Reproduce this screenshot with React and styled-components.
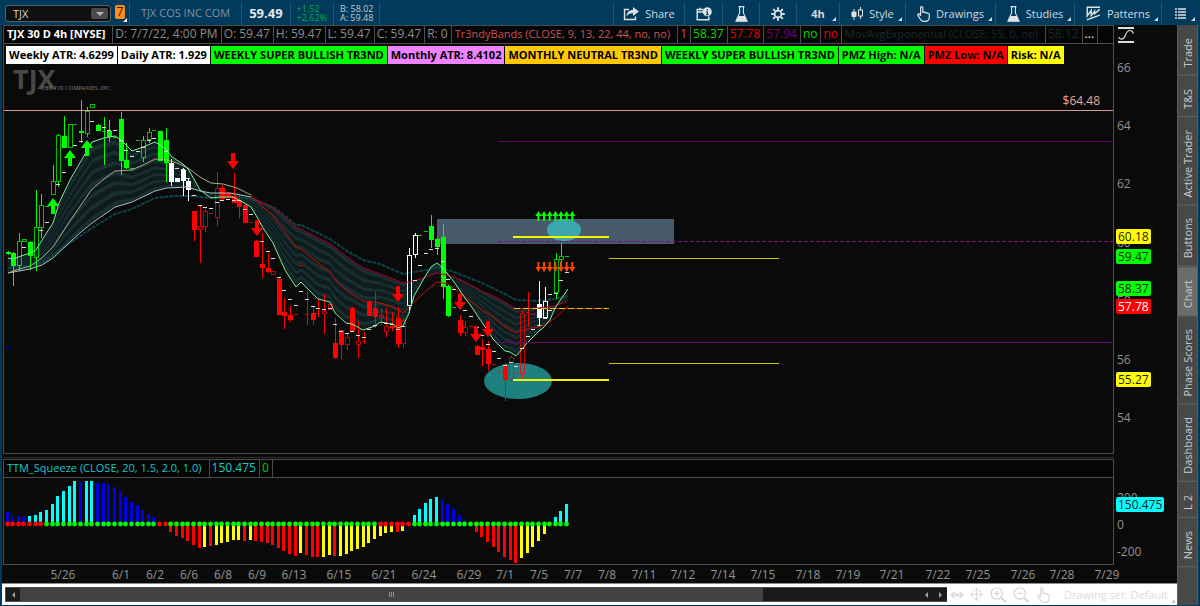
import React from "react";

// external libs
import styled, { createGlobalStyle, css } from "styled-components";

const GlobalStyle = createGlobalStyle`
  * {
    box-sizing: border-box;
  }

  body {
    margin: 0;
    background: #003a5c;
    font-family: "Open Sans", "Noto Sans", sans-serif;
    font-size: 12px;
    line-height: 16px;
    color: #929292;
  }

  button,
  input {
    font: inherit;
    color: inherit;
    margin: 0;
  }

  button {
    padding: 0;
    border: 0;
    background: none;
  }
`;

const GREEN = "#00ff00";
const RED = "#ff0000";
const WHITE = "#ffffff";
const YELLOW = "#ffff00";
const CYAN = "#00ffff";
const BLUE = "#0000e6";
const PURPLE = "#6e006e";

// first bar and distance between bars
const barX = i => 7.5 + i * 5.653;

// index, high, top of body, bottom of body, low, colour, hollow
const candles = [
  [0, 251, 252, 254, 255, GREEN],
  [1, 252, 253, 266, 286, GREEN],
  [2, 233, 241, 266, 271, GREEN, true],
  [3, 239, 239, 242, 242, GREEN, true],
  [4, 241, 242, 256, 270, GREEN],
  [5, 190, 227, 258, 271, GREEN, true],
  [6, 194, 205, 228, 238, GREEN, true],
  [7, 206, 206, 207, 207, GREEN],
  [8, 165, 181, 195, 195, GREEN, true],
  [9, 134, 135, 182, 187, GREEN, true],
  [10, 116, 136, 148, 148, GREEN],
  [11, 124, 124, 148, 148, GREEN, true],
  [12, 124, 124, 125, 125, GREEN],
  [13, 100, 131, 133, 143, GREEN],
  [14, 107, 111, 134, 137, GREEN, true],
  [15, 104, 104, 108, 108, GREEN, true],
  [16, 124, 125, 131, 131, GREEN],
  [17, 117, 131, 132, 165, GREEN],
  [18, 120, 131, 137, 142, GREEN],
  [19, 137, 137, 138, 138, GREEN],
  [20, 112, 119, 161, 175, GREEN],
  [21, 143, 160, 168, 169, GREEN],
  [22, 168, 168, 169, 169, GREEN],
  [23, 140, 140, 141, 141, GREEN],
  [24, 136, 140, 158, 162, GREEN, true],
  [25, 128, 132, 140, 143, GREEN, true],
  [26, 130, 130, 131, 131, GREEN],
  [27, 131, 131, 161, 161, GREEN],
  [28, 128, 140, 163, 182, GREEN],
  [29, 159, 163, 182, 186, WHITE],
  [30, 178, 178, 182, 182, WHITE],
  [31, 168, 170, 181, 196, WHITE],
  [32, 178, 181, 190, 201, WHITE],
  [33, 211, 211, 230, 241, RED],
  [34, 206, 226, 230, 263, RED, true],
  [35, 207, 211, 227, 232, RED, true],
  [36, 213, 213, 214, 214, RED],
  [37, 172, 188, 218, 226, RED, true],
  [38, 185, 188, 199, 201, RED],
  [39, 192, 193, 197, 198, RED],
  [40, 173, 196, 203, 203, RED],
  [41, 194, 201, 207, 218, RED],
  [42, 204, 205, 223, 223, RED],
  [43, 222, 222, 223, 223, RED],
  [44, 240, 241, 257, 257, RED],
  [45, 233, 264, 268, 278, RED],
  [46, 253, 268, 272, 273, RED],
  [47, 271, 271, 275, 275, RED, true],
  [48, 278, 279, 315, 315, RED],
  [49, 298, 312, 316, 329, RED],
  [50, 306, 315, 320, 322, RED],
  [51, 314, 314, 315, 315, RED],
  [52, 265, 265, 266, 266, RED],
  [53, 291, 314, 315, 325, RED],
  [54, 307, 313, 320, 325, RED],
  [55, 299, 313, 314, 317, RED],
  [56, 294, 311, 314, 334, RED, true],
  [57, 304, 304, 310, 310, RED, true],
  [58, 318, 343, 358, 359, RED],
  [59, 330, 330, 345, 359, RED],
  [60, 333, 337, 345, 350, RED, true],
  [61, 307, 308, 331, 331, RED],
  [62, 322, 341, 345, 358, RED, true],
  [63, 332, 341, 342, 344, RED],
  [64, 300, 301, 316, 316, RED],
  [65, 292, 308, 317, 328, RED],
  [66, 308, 315, 317, 325, RED, true],
  [67, 308, 326, 332, 337, RED, true],
  [68, 312, 326, 328, 331, RED],
  [69, 307, 318, 344, 348, RED],
  [70, 318, 320, 344, 348, RED, true],
  [71, 248, 255, 306, 313, WHITE, true],
  [72, 233, 235, 255, 258, WHITE, true],
  [73, 235, 235, 236, 236, GREEN],
  [74, 231, 231, 232, 232, GREEN],
  [75, 215, 226, 240, 248, GREEN],
  [76, 238, 239, 247, 255, GREEN],
  [77, 224, 237, 287, 299, GREEN],
  [78, 285, 286, 316, 317, GREEN],
  [79, 307, 307, 308, 308, GREEN],
  [80, 315, 320, 333, 336, RED],
  [81, 321, 327, 333, 336, RED, true],
  [82, 326, 326, 327, 327, RED],
  [83, 345, 346, 355, 355, RED],
  [84, 339, 347, 350, 366, RED],
  [85, 341, 349, 364, 371, RED],
  [86, 364, 364, 365, 365, RED],
  [87, 371, 371, 372, 372, RED],
  [88, 363, 365, 380, 401, RED],
  [89, 356, 357, 380, 382, RED, true],
  [90, 373, 373, 374, 374, RED],
  [91, 311, 313, 374, 378, RED, true],
  [92, 292, 312, 313, 327, RED],
  [93, 314, 314, 315, 315, RED],
  [94, 281, 304, 318, 327, WHITE],
  [95, 287, 301, 318, 318, WHITE, true],
  [97, 253, 259, 293, 299, GREEN, true],
  [98, 243, 256, 260, 264, GREEN, true],
  [99, 256, 256, 257, 257, GREEN]
];

// small white marks, index and y
const marks = [
  [3, 247], [6, 230], [7, 222], [8, 208], [9, 184], [10, 172], [11, 157],
  [12, 145], [13, 141], [14, 147], [15, 121], [17, 127], [18, 130], [19, 130],
  [20, 140], [21, 150], [22, 156], [23, 151], [24, 147], [25, 140], [26, 138],
  [28, 151], [30, 168], [31, 169], [32, 178], [33, 195], [34, 205], [35, 207],
  [36, 208], [37, 202], [38, 200], [39, 199], [40, 200], [41, 200], [42, 209],
  [43, 214], [44, 229], [45, 241], [46, 251], [47, 258], [48, 277], [49, 290],
  [50, 299], [51, 305], [52, 291], [53, 299], [54, 306], [55, 308], [56, 309],
  [57, 308], [58, 324], [59, 331], [60, 333], [61, 331], [62, 335], [63, 337],
  [64, 329], [65, 325], [67, 323], [68, 324], [69, 329], [70, 326], [71, 305],
  [72, 280], [73, 265], [74, 253], [75, 249], [76, 248], [77, 261], [78, 279],
  [79, 289], [80, 303], [81, 310], [82, 316], [83, 327], [84, 335], [85, 344],
  [86, 351], [87, 358], [88, 365], [89, 362], [90, 366], [91, 348], [92, 336],
  [93, 329], [94, 325], [95, 318], [96, 310], [96, 294], [97, 293], [98, 280],
  [99, 272]
];

const fastLine = [
  [8, 258], [13, 259], [24, 255], [30, 253], [36, 250], [42, 240], [53, 223],
  [59, 203], [70, 180], [81, 161], [92, 142], [104, 138], [115, 136],
  [121, 140], [132, 151], [143, 147], [155, 142], [160, 145], [166, 149],
  [172, 157], [183, 164], [188, 169], [194, 179], [200, 190], [211, 198],
  [220, 197], [233, 197], [239, 200], [251, 207], [257, 217], [263, 228],
  [273, 243], [285, 270], [296, 287], [301, 282], [307, 288], [318, 299],
  [330, 302], [335, 313], [346, 323], [352, 324], [363, 330], [375, 326],
  [380, 322], [393, 324], [398, 328], [403, 326], [409, 313], [414, 296],
  [426, 275], [431, 267], [437, 263], [443, 268], [454, 282], [465, 298],
  [471, 306], [477, 315], [488, 331], [493, 339], [499, 345], [505, 351],
  [510, 352], [516, 356], [522, 349], [527, 343], [538, 332], [544, 327],
  [550, 320], [555, 308], [561, 299], [568, 289]
];

const midLine = [
  [8, 273], [16, 270], [30, 266], [42, 258], [53, 247], [59, 238], [70, 221],
  [81, 205], [92, 189], [104, 179], [115, 171], [132, 170], [143, 165],
  [155, 159], [167, 160], [177, 163], [188, 168], [200, 177], [211, 183],
  [223, 184], [237, 188], [251, 195], [263, 207], [273, 216], [285, 232],
  [296, 247], [301, 249], [318, 263], [330, 272], [335, 280], [347, 291],
  [363, 301], [380, 303], [393, 307], [403, 313], [410, 306], [426, 291],
  [437, 282], [448, 284], [465, 297], [482, 310], [493, 317], [505, 327],
  [516, 333], [527, 329], [538, 327], [550, 322], [555, 318], [568, 306]
];

const slowLine = [
  [8, 273], [30, 269], [42, 265], [53, 258], [70, 242], [81, 232], [92, 223],
  [115, 207], [132, 202], [155, 191], [167, 188], [187, 187], [200, 191],
  [211, 193], [230, 193], [251, 197], [267, 205], [273, 208], [285, 218],
  [296, 227], [301, 229], [318, 238], [330, 244], [347, 257], [363, 268],
  [380, 274], [393, 279], [403, 283], [413, 281], [426, 277], [437, 273],
  [454, 277], [465, 282], [482, 291], [493, 296], [505, 302], [516, 309],
  [538, 308], [555, 306], [568, 301]
];

const outerLine = [
  [8, 268], [30, 266], [42, 262], [53, 255], [70, 243], [92, 228], [115, 214],
  [132, 209], [155, 198], [173, 196], [193, 196], [211, 198], [233, 197],
  [251, 199], [273, 207], [285, 216], [296, 225], [301, 225], [318, 233],
  [330, 239], [347, 251], [363, 260], [380, 264], [403, 274], [426, 270],
  [437, 267], [454, 272], [482, 283], [505, 294], [516, 300], [537, 301],
  [555, 299], [568, 296]
];

// heights above (+) or below (-) the zero line
const squeeze = [
  12, 8, 8, 7, 8, 9, 12, 14, 20, 28, 33, 38, 43, 42, 43, 43, 41, 41, 40, 37,
  33, 27, 22, 19, 14, 10, 7, 0, 0, -8, -12, -14, -17, -21, -24, -23, -22, -21,
  -19, -18, -16, -16, -17, -16, -17, -18, -19, -21, -24, -27, -30, -32, -29,
  -31, -33, -33, -33, -31, -32, -32, -30, -27, -25, -23, -19, -15, -12, -9,
  -8, -8, -7, 0, 9, 15, 21, 25, 27, 25, 20, 15, 9, 4, 0, -8, -13, -18, -23,
  -28, -33, -36, -39, -34, -29, -23, -17, -10, -2, 7, 13, 20
];

const fallingBars = [36, 42, 53, 54, 55, 58, 69];
const darkBars = [0, 1, 2, 3, 13];

const squeezeColor = (value, i) => {
  if (value > 0) {
    if (darkBars.includes(i)) return BLUE;
    return (i >= 16 && i <= 26) || (i >= 77 && i <= 82) ? BLUE : CYAN;
  }
  if (fallingBars.includes(i)) return RED;
  if (i <= 34 || (i >= 44 && i <= 51) || (i >= 83 && i <= 90)) return RED;
  return YELLOW;
};

const isSqueezed = i =>
  i <= 6 || i === 27 || i === 28 || (i >= 66 && i <= 71);

const dates = [
  [63, "5/26"], [121, "6/1"], [155, "6/2"], [189, "6/6"], [223, "6/8"],
  [257, "6/9"], [294, "6/13"], [339, "6/15"], [384, "6/21"], [424, "6/24"],
  [469, "6/29"], [505, "7/1"], [539, "7/5"], [573, "7/7"], [607, "7/8"],
  [644, "7/11"], [683, "7/12"], [723, "7/14"], [763, "7/15"], [808, "7/18"],
  [848, "7/19"], [892, "7/21"], [938, "7/22"], [978, "7/25"], [1023, "7/26"],
  [1062, "7/28"], [1107, "7/29"]
];

const studyCells = [
  { text: "TJX 30 D 4h [NYSE]", color: "#ffffff", bold: true, wordy: true },
  { text: "D: 7/7/22, 4:00 PM" },
  { text: "O: 59.47" },
  { text: "H: 59.47" },
  { text: "L: 59.47" },
  { text: "C: 59.47" },
  { text: "R: 0" },
  {
    text: "Tr3ndyBands (CLOSE, 9, 13, 22, 44, no, no)",
    color: "#d05050",
    wordy: true
  },
  { text: "1", color: "#d05050" },
  { text: "58.37", color: "#00dc00" },
  { text: "57.78", color: "#e60000" },
  { text: "57.94", color: "#780078" },
  { text: "no", color: "#00dc00" },
  { text: "no", color: "#e60000" },
  {
    text: "MovAvgExponential (CLOSE, 55, 0, no)",
    color: "#142c2c",
    wordy: true
  },
  { text: "58.12", color: "#142c2c" },
  { text: "...", color: "#ffffff" }
];

const labels = [
  { text: "Weekly ATR: 4.6299", color: WHITE },
  { text: "Daily ATR: 1.929", color: WHITE },
  { text: "WEEKLY SUPER BULLISH TR3ND", color: GREEN },
  { text: "Monthly ATR: 8.4102", color: "#ee82ff" },
  { text: "MONTHLY NEUTRAL TR3ND", color: "#ffc800" },
  { text: "WEEKLY SUPER BULLISH TR3ND", color: GREEN },
  { text: "PMZ High: N/A", color: GREEN },
  { text: "PMZ Low: N/A", color: RED },
  { text: "Risk: N/A", color: YELLOW }
];

const tabs = [
  "Trade",
  "T&S",
  "Active Trader",
  "Buttons",
  "Chart",
  "Phase Scores",
  "Dashboard",
  "L 2",
  "News"
];

const toPoints = line => line.map(p => p.join(",")).join(" ");

const valueAt = (line, x) => {
  const next = line.findIndex(p => p[0] >= x);
  if (next <= 0) return line[next === 0 ? 0 : line.length - 1][1];
  const [x0, y0] = line[next - 1];
  const [x1, y1] = line[next];
  return y0 + ((y1 - y0) * (x - x0)) / (x1 - x0);
};

// strip of the cloud between two fractions of the way from fast to slow
const ribbon = (from, to) => {
  const xs = Array.from({ length: 100 }, (_, i) => barX(i));
  const edge = f =>
    xs.map(x => {
      const a = valueAt(fastLine, x);
      const b = valueAt(slowLine, x);
      return [x, a + (b - a) * f];
    });
  return toPoints([...edge(from), ...edge(to).reverse()]);
};

const Candle = ({ data }) => {
  const [i, high, top, bottom, low, color, hollow] = data;
  const x = Math.round(barX(i));
  const flat = bottom - top === 1;
  return (
    <g fill={color} stroke="none">
      {high < top && <rect x={x} y={high} width="1" height={top - high} />}
      {low > bottom && <rect x={x} y={bottom} width="1" height={low - bottom} />}
      {hollow ? (
        <rect
          x={x - 1.5}
          y={top + 0.5}
          width="4"
          height={Math.max(bottom - top - 1, 2)}
          fill="none"
          stroke={color}
          opacity={color === WHITE ? 1 : 0.75}
        />
      ) : (
        <rect
          x={x - 2}
          y={top}
          width={flat ? 4 : 5}
          height={bottom - top}
          opacity={flat ? 0.8 : 1}
        />
      )}
    </g>
  );
};

const BigArrow = ({ x, y, up }) => (
  <path
    transform={`translate(${x} ${y})${up ? "" : " scale(1 -1)"}`}
    d="M0 -8 L6 0 H2 V8 H-2 V0 H-6 Z"
    fill={up ? GREEN : RED}
  />
);

const SmallArrow = ({ x, y, up }) => (
  <path
    transform={`translate(${x} ${y})${up ? "" : " scale(1 -1)"}`}
    d="M0 -5 L3 0 H1 V5 H-1 V0 H-3 Z"
    fill={up ? GREEN : "#ff4600"}
  />
);

const PriceChart = () => (
  <PlotSvg role="img" aria-label="TJX price chart">
    {/* plot values are kept in window space, the svg starts at 4, 44 */}
    <g transform="translate(-4 -44)">
      <g fill="#484848">
        <text x="13" y="89" fontSize="27" fontWeight="bold" fontFamily="Open Sans, sans-serif">
          TJX
        </text>
        <text
          x="41"
          y="90"
          fontSize="6"
          fontStyle="italic"
          fontFamily="Liberation Serif, serif"
          fill="#7c7c7c"
        >
          THE TJX COMPANIES, INC.
        </text>
      </g>

      <rect x="437" y="219" width="237" height="25" fill="#475a69" />
      <ellipse cx="518" cy="381" rx="34" ry="18" fill="#1e8080" />
      <ellipse cx="564" cy="230" rx="17" ry="11" fill="#3ba8b0" />

      <polygon points={ribbon(0, 1)} fill="#0f1c1d" />
      {[0, 1, 2, 3, 4, 5, 6].map(k => (
        <polygon
          key={k}
          points={ribbon((k + 0.45) / 7, (k + 0.85) / 7)}
          fill="#193032"
        />
      ))}

      <polyline
        points={toPoints(outerLine)}
        fill="none"
        stroke="#0d4448"
        strokeWidth="2"
        strokeDasharray="4 1"
      />

      <g shapeRendering="crispEdges">
        {candles.map(c => (
          <Candle key={c[0]} data={c} />
        ))}
      </g>

      <g fill="none">
        <polyline points={toPoints(slowLine.slice(0, 16))} stroke="#a8c4c4" />
        <polyline points={toPoints(slowLine.slice(15))} stroke="#b4002e" />
        <polyline points={toPoints(midLine.slice(0, 22))} stroke="#b0a98c" />
        <polyline points={toPoints(midLine.slice(21))} stroke="#c80a0a" />
        <polyline points={toPoints(fastLine)} stroke="#7ef29c" />
      </g>

      <g shapeRendering="crispEdges">
        {marks.map(([i, y]) => (
          <rect
            key={`${i}-${y}`}
            x={Math.round(barX(i)) - 2}
            y={y}
            width="4"
            height="1"
            fill="#e0e0e0"
          />
        ))}

        <rect x="4" y="110" width="100%" height="1" fill="#d89a90" />
        <rect x="498" y="141" width="100%" height="1" fill="#5c085c" />
        <line
          x1="498"
          x2="200%"
          y1="241.5"
          y2="241.5"
          stroke="#7c107c"
          strokeDasharray="4 2"
        />
        <rect x="498" y="342" width="100%" height="1" fill={PURPLE} />
        <rect x="5" y="348" width="6" height="1" fill="#0000c8" />
        <rect x="513" y="236" width="96" height="2" fill="#f5f500" />
        <rect x="513" y="379" width="96" height="2" fill="#f5f500" />
        <rect x="609" y="258" width="170" height="1" fill="#c8c800" />
        <rect x="609" y="363" width="170" height="1" fill="#c8c800" />
        <rect x="514" y="308" width="95" height="1" fill="#c81400" />
        <line
          x1="514"
          x2="609"
          y1="308.5"
          y2="308.5"
          stroke="#e6c800"
          strokeDasharray="6 3"
        />
      </g>

      <BigArrow up x={53} y={206} />
      <BigArrow up x={70} y={158} />
      <BigArrow up x={87} y={148} />
      <BigArrow x={233} y={161} />
      <BigArrow x={257} y={228} />
      <BigArrow x={398} y={294} />
      <BigArrow x={460} y={302} />
      <BigArrow x={476} y={334} />
      <BigArrow x={488} y={329} />
      {[94, 95, 96, 97, 98, 99, 100].map(i => (
        <g key={i}>
          <SmallArrow up x={barX(i) - 0.5} y={216} />
          <SmallArrow x={barX(i) - 0.5} y={267} />
        </g>
      ))}
    </g>
  </PlotSvg>
);

const SqueezeChart = () => (
  <PlotSvg role="img" aria-label="TTM Squeeze histogram">
    {/* zero line sits 46px below the panel header */}
    <g transform="translate(-4 46)">
      {squeeze.map((value, i) => (
        <g key={i}>
          <rect
            x={Math.round(barX(i)) - 2}
            y={value > 0 ? -value : 0}
            width="3"
            height={Math.abs(value)}
            fill={squeezeColor(value, i)}
          />
          <circle
            cx={Math.round(barX(i)) - 0.5}
            cy="0"
            r="2.4"
            fill={isSqueezed(i) ? RED : GREEN}
          />
        </g>
      ))}
    </g>
  </PlotSvg>
);

const ShareIcon = () => (
  <svg width="16" height="14" viewBox="0 0 16 14" aria-hidden="true">
    <path
      d="M6 2.5H1.5V12.5H12.5V9.5"
      fill="none"
      stroke="#dfe3e6"
      strokeWidth="1.4"
    />
    <path d="M10 0L16 4.5L10 9V6.3C7 6.2 5 7 3.4 9.6C3.6 5.6 6 3 10 2.7Z" fill="#dfe3e6" />
  </svg>
);

const NoteIcon = () => (
  <svg width="16" height="14" viewBox="0 0 16 14" aria-hidden="true">
    <path
      d="M7.5 2.5H1.2V12.8H12.8V9.5M1.2 5H7.5M4 0.8V3.5"
      fill="none"
      stroke="#dfe3e6"
      strokeWidth="1.4"
    />
    <circle cx="11.3" cy="4.8" r="4.5" fill="#dfe3e6" />
    <path d="M11.3 2V3.3M11.3 4.4V7.8M10.3 4.5H11.3M10 7.6H12.6" stroke="#003a5c" strokeWidth="1.2" />
  </svg>
);

const FlaskIcon = () => (
  <svg width="13" height="16" viewBox="0 0 13 16" aria-hidden="true">
    <path
      d="M3.5 0.6H9.5M4.6 1V7L0.9 15.2H12.1L8.4 7V1"
      fill="none"
      stroke="#dfe3e6"
      strokeWidth="1.1"
    />
    <path d="M3.4 10H9.6L12 15.2H1Z" fill="#dfe3e6" />
  </svg>
);

const GearIcon = () => (
  <svg width="14" height="14" viewBox="-7 -7 14 14" aria-hidden="true">
    <circle r="3.4" fill="none" stroke="#dfe3e6" strokeWidth="1.8" />
    {[0, 45, 90, 135, 180, 225, 270, 315].map(a => (
      <path
        key={a}
        transform={`rotate(${a})`}
        d="M0 -4V-6.8"
        stroke="#dfe3e6"
        strokeWidth="1.9"
      />
    ))}
  </svg>
);

const CandlesIcon = () => (
  <svg width="12" height="14" viewBox="0 0 12 14" aria-hidden="true">
    <path d="M3 2V13" stroke="#dfe3e6" />
    <rect x="0.5" y="4.5" width="5" height="5.5" rx="1" fill="#dfe3e6" />
    <path d="M9.5 0V3M9.5 9V12" stroke="#dfe3e6" />
    <rect x="7.5" y="3" width="4" height="6" fill="none" stroke="#dfe3e6" />
  </svg>
);

const HandIcon = ({ color = "#dfe3e6" }) => (
  <svg width="13" height="16" viewBox="0 0 13 16" aria-hidden="true">
    <path
      d="M3.6 9.8V1.8Q3.6 0.7 4.7 0.7Q5.8 0.7 5.8 1.8V6.2Q7.6 5.2 8 6.7Q9.8 5.9 10.2 7.4Q12.3 7 12.3 8.8V11Q12.3 15.3 8 15.3H6.8Q4.4 15.3 3.2 13L0.9 9.4Q0.5 8.2 1.6 7.9Q2.6 7.8 3.6 9.8Z"
      fill="none"
      stroke={color}
      strokeWidth="1.2"
    />
  </svg>
);

const PatternsIcon = () => (
  <svg width="15" height="15" viewBox="0 0 15 15" aria-hidden="true">
    <path
      d="M0.5 1.2H14M0.8 13.8L13.8 9.2M1.2 2V10L5.2 4.4V9.6L8.6 5V7.8L13.6 3.4"
      fill="none"
      stroke="#dfe3e6"
      strokeWidth="1.4"
    />
  </svg>
);

const ListIcon = () => (
  <svg width="11" height="11" viewBox="0 0 11 11" aria-hidden="true">
    <path
      d="M0 1H2M0 4H2M0 7H2M0 10H2M3 1H11M3 4H11M3 7H11M3 10H11"
      stroke="#dfe3e6"
      strokeWidth="1.3"
    />
  </svg>
);

const ScaleIcon = () => (
  <svg width="17" height="16" viewBox="0 0 17 16" aria-hidden="true">
    <path d="M0 1H16M0 15H16" stroke="#dcdcdc" strokeWidth="2" />
    <path
      d="M0.5 10C2 13 5.5 13 7 9C8.5 5 10 3.5 12 3.5C13.8 3.5 15 5 15.5 6.5"
      fill="none"
      stroke="#dcdcdc"
      strokeWidth="1.2"
    />
  </svg>
);

const PanIcon = () => (
  <svg width="14" height="10" viewBox="0 0 14 10" aria-hidden="true">
    <path d="M0 5L4.5 0.8V9.2ZM14 5L9.5 0.8V9.2ZM5 3.4H9V6.6H5Z" fill="#dcdcdc" />
  </svg>
);

const CrosshairIcon = () => (
  <svg width="13" height="13" viewBox="0 0 13 13" aria-hidden="true">
    <path d="M6.5 0V13M0 6.5H13" stroke="#d8d8d8" />
    <circle cx="6.5" cy="6.5" r="4.8" fill="none" stroke="#d8d8d8" />
  </svg>
);

const LensIcon = ({ plus }) => (
  <svg width="17" height="16" viewBox="0 0 17 16" aria-hidden="true">
    <circle cx="6.8" cy="6.5" r="5.7" fill="none" stroke="#d8d8d8" strokeWidth="1.3" />
    <path
      d={plus ? "M4 6.5H9.6M6.8 3.7V9.3" : "M4 6.5H9.6"}
      stroke="#d8d8d8"
      strokeWidth="1.3"
    />
    <path d="M11 10.7L16 15.5" stroke="#d8d8d8" strokeWidth="2" />
  </svg>
);

const App = () => (
  <>
    <GlobalStyle />
    <Wrapper>
      <TopBar>
        <SymbolBox>
          <SymbolInput aria-label="Symbol" defaultValue="TJX" />
          <DropButton aria-label="Symbol list" />
        </SymbolBox>
        <LinkBadge aria-label="Link 7">7</LinkBadge>
        <CompanyName>TJX COS INC COM</CompanyName>
        <LastPrice>59.49</LastPrice>
        <QuotePair $color="#00b43c">
          <span>+1.52</span>
          <span>+2.62%</span>
        </QuotePair>
        <QuotePair $color="#c3ccd2">
          <span>B: 58.02</span>
          <span>A: 59.48</span>
        </QuotePair>
        <Spacer />
        <ToolButton $width={71}>
          <ShareIcon />
          Share
        </ToolButton>
        <ToolButton $width={38} aria-label="Notes">
          <NoteIcon />
        </ToolButton>
        <ToolButton $width={37} aria-label="Edit studies">
          <FlaskIcon />
        </ToolButton>
        <ToolButton $width={37} aria-label="Settings">
          <GearIcon />
        </ToolButton>
        <ToolButton $width={43} $bold $menu>
          4h
        </ToolButton>
        <ToolButton $width={66} $menu>
          <CandlesIcon />
          Style
        </ToolButton>
        <ToolButton $width={90} $menu>
          <HandIcon />
          Drawings
        </ToolButton>
        <ToolButton $width={79} $menu>
          <FlaskIcon />
          Studies
        </ToolButton>
        <ToolButton $width={87} $menu>
          <PatternsIcon />
          Patterns
        </ToolButton>
        <ToolButton $width={37} $menu aria-label="Menu">
          <ListIcon />
        </ToolButton>
      </TopBar>

      <Main>
        <Workspace>
          <PanelRow $grow>
            <Panel>
              <StudyHeader>
                {studyCells.map((cell, i) => (
                  <StudyCell
                    key={i}
                    $color={cell.color}
                    $bold={cell.bold}
                    $wordy={cell.wordy}
                  >
                    {cell.text}
                  </StudyCell>
                ))}
              </StudyHeader>
              <Plot>
                <PriceChart />
                <Labels>
                  {labels.map((label, i) => (
                    <Label key={i} $color={label.color}>
                      {label.text}
                    </Label>
                  ))}
                </Labels>
                <AlertPrice>$64.48</AlertPrice>
              </Plot>
            </Panel>
            <Axis>
              <ScaleButton aria-label="Price scale">
                <ScaleIcon />
              </ScaleButton>
              <AxisLabel $top={35}>66</AxisLabel>
              <AxisLabel $top={93}>64</AxisLabel>
              <AxisLabel $top={151}>62</AxisLabel>
              <AxisLabel $top={210}>60</AxisLabel>
              <AxisLabel $top={268}>58</AxisLabel>
              <AxisLabel $top={327}>56</AxisLabel>
              <AxisLabel $top={385}>54</AxisLabel>
              <PriceTag $top={204} $color={YELLOW}>60.18</PriceTag>
              <PriceTag $top={224} $color={GREEN}>59.47</PriceTag>
              <PriceTag $top={256} $color={GREEN}>58.37</PriceTag>
              <PriceTag $top={274} $color={RED} $light>57.78</PriceTag>
              <PriceTag $top={347} $color={YELLOW}>55.27</PriceTag>
            </Axis>
          </PanelRow>

          <Divider />

          <PanelRow>
            <Panel>
              <StudyHeader>
                <StudyCell $color="#14c8c8" $wordy>
                  TTM_Squeeze (CLOSE, 20, 1.5, 2.0, 1.0)
                </StudyCell>
                <StudyCell $color="#14c8c8">150.475</StudyCell>
                <StudyCell $color="#00c800">0</StudyCell>
              </StudyHeader>
              <Plot $height={86}>
                <SqueezeChart />
              </Plot>
            </Panel>
            <Axis>
              <AxisLabel $top={31}>200</AxisLabel>
              <AxisLabel $top={58}>0</AxisLabel>
              <AxisLabel $top={85}>-200</AxisLabel>
              <PriceTag $top={38} $color={CYAN}>150.475</PriceTag>
            </Axis>
          </PanelRow>

          <TimeAxis>
            {dates.map(([x, text]) => (
              <text key={text} x={x - 2} y="14" textAnchor="middle">
                {text}
              </text>
            ))}
          </TimeAxis>

          <BottomBar>
            <ScrollTrack>
              <ScrollButton aria-label="Scroll to start">
                <Triangle $left />
              </ScrollButton>
              <ScrollThumb>
                <i />
                <i />
                <i />
              </ScrollThumb>
              <Spacer />
              <ScrollButton aria-label="Scroll left">
                <Triangle $left />
              </ScrollButton>
              <ScrollButton aria-label="Scroll right">
                <Triangle />
              </ScrollButton>
            </ScrollTrack>
            <DrawingTools>
              <button aria-label="Pan">
                <PanIcon />
              </button>
              <button aria-label="Crosshair">
                <CrosshairIcon />
              </button>
              <button aria-label="Zoom in">
                <LensIcon plus />
              </button>
              <button aria-label="Zoom out">
                <LensIcon />
              </button>
              <button aria-label="Pointer">
                <HandIcon color="#d8d8d8" />
              </button>
              <DrawingSet>Drawing set: Default</DrawingSet>
            </DrawingTools>
          </BottomBar>
        </Workspace>

        <SideTabs>
          {tabs.map(tab => (
            <SideTab key={tab} $active={tab === "Chart"}>
              {tab}
            </SideTab>
          ))}
        </SideTabs>
      </Main>
    </Wrapper>
  </>
);

const Wrapper = styled.div`
  display: flex;
  flex-direction: column;
  min-height: 100vh;
  padding: 0 2px 1px;
`;

const cornerMark = css`
  position: relative;

  &::after {
    content: "";
    position: absolute;
    right: 3px;
    bottom: 4px;
    border-left: 4px solid transparent;
    border-bottom: 4px solid currentColor;
  }
`;

const TopBar = styled.header`
  display: flex;
  align-items: stretch;
  height: 25px;
  padding-top: 2px;
  background: #003a5c;
`;

const SymbolBox = styled.div`
  display: flex;
  align-items: center;
  width: 106px;
  height: 17px;
  margin: 3px 4px 3px 3px;
  border: 1px solid #58626a;
  border-radius: 3px;
  background: #101010;
`;

const SymbolInput = styled.input`
  flex: 1;
  min-width: 0;
  height: 14px;
  padding: 0 7px;
  border: 0;
  outline: 0;
  background: transparent;
  color: #d2d2d2;
  font-size: 11px;
`;

const DropButton = styled.button`
  display: flex;
  align-items: center;
  justify-content: center;
  width: 17px;
  height: 11px;
  margin-right: 2px;
  border-radius: 2px;
  background: #4a4a4a;

  &::before {
    content: "";
    border: 4px solid transparent;
    border-top-color: #b4b4b4;
    border-bottom: 0;
  }
`;

const LinkBadge = styled.button`
  position: relative;
  width: 10px;
  height: 14px;
  margin-top: 3px;
  margin-right: 4px;
  border-radius: 2px;
  background: #ff8c1a;
  color: #3c2000;
  line-height: 14px;

  &::after {
    content: "";
    position: absolute;
    right: -2px;
    bottom: -3px;
    border-left: 4px solid transparent;
    border-bottom: 4px solid #ffffff;
  }
`;

const CompanyName = styled.div`
  padding: 3px 11px 0;
  border-left: 1px solid #1d5477;
  color: #8293a0;
  font-size: 11px;
  white-space: nowrap;
`;

const LastPrice = styled.div`
  padding: 3px 7px 0;
  border-left: 1px solid #1d5477;
  color: #e6e9eb;
  font-size: 13px;
  font-weight: 700;
`;

const QuotePair = styled.div`
  display: flex;
  flex-direction: column;
  padding: 2px 6px 0;
  border-left: 1px solid #1d5477;
  font-size: 9px;
  line-height: 9px;
  color: ${props => props.$color};
  white-space: nowrap;

  & + & {
    border-right: 1px solid #1d5477;
  }
`;

const Spacer = styled.div`
  flex: 1;
`;

const ToolButton = styled.button`
  display: flex;
  align-items: center;
  justify-content: center;
  gap: 6px;
  width: ${props => props.$width}px;
  border-left: 1px solid #1d5477;
  color: #d5dade;
  font-size: 11px;
  font-weight: ${props => (props.$bold ? 700 : 400)};
  white-space: nowrap;
  ${props => props.$menu && cornerMark}
`;

const Main = styled.div`
  display: flex;
  flex: 1;
`;

const Workspace = styled.main`
  display: flex;
  flex: 1;
  flex-direction: column;
  min-width: 0;
  background: #0a0a0a;
`;

const PanelRow = styled.div`
  display: flex;
  flex: ${props => (props.$grow ? 1 : "none")};
  padding-left: 1px;
`;

const Panel = styled.section`
  display: flex;
  flex: 1;
  flex-direction: column;
  min-width: 0;
  border: 1px solid #4c4c4c;
`;

const StudyHeader = styled.div`
  display: flex;
  height: 18px;
  overflow: hidden;
  border-bottom: 1px solid #4c4c4c;
  background: #050505;
`;

const StudyCell = styled.div`
  padding: ${props => (props.$wordy ? "0 7px 0 3px" : "0 3px 0 2px")};
  border-right: 1px solid #4c4c4c;
  font-size: ${props => (props.$wordy ? 11 : 12)}px;
  font-weight: ${props => (props.$bold ? 700 : 400)};
  color: ${props => props.$color || "#8c8c8c"};
  white-space: nowrap;
`;

const Plot = styled.div`
  position: relative;
  flex: 1 0 auto;
  min-height: ${props => props.$height || 0}px;
  overflow: hidden;
`;

const PlotSvg = styled.svg`
  position: absolute;
  inset: 0;
  display: block;
  width: 100%;
  height: 100%;
`;

const Labels = styled.div`
  position: relative;
  display: flex;
  gap: 1px;
  padding: 2px 2px 0;
`;

const Label = styled.div`
  height: 18px;
  padding: 0 3px;
  background: ${props => props.$color};
  color: #000000;
  font-size: 11px;
  font-weight: 700;
  line-height: 18px;
  white-space: nowrap;
`;

const AlertPrice = styled.div`
  position: absolute;
  top: 49px;
  right: 13px;
  color: #e8a898;
`;

const Axis = styled.div`
  position: relative;
  width: 63px;
`;

const ScaleButton = styled.button`
  display: block;
  height: 16px;
  margin: 2px 4px;
`;

const AxisLabel = styled.div`
  position: absolute;
  top: ${props => props.$top}px;
  left: 3px;
`;

const PriceTag = styled.div`
  position: absolute;
  top: ${props => props.$top}px;
  left: 2px;
  height: 15px;
  padding: 0 2px;
  border-radius: 2px;
  background: ${props => props.$color};
  color: ${props => (props.$light ? "#ffffff" : "#202020")};
  line-height: 15px;
`;

const Divider = styled.div`
  height: 4px;
  margin-right: 63px;
  margin-left: 2px;
  border-bottom: 1px solid #2c2c2c;
  margin-bottom: 1px;
`;

const TimeAxis = styled.svg`
  display: block;
  width: 100%;
  height: 18px;
  font-size: 12px;
  fill: #929292;
`;

const BottomBar = styled.div`
  display: flex;
  padding: 3px 0 3px 3px;
  border-top: 1px solid #8c8c8c;
  background: #ffffff;
`;

const ScrollTrack = styled.div`
  display: flex;
  flex: 1;
  height: 15px;
  border: 1px solid #505050;
  border-right: 0;
  background: #1a1a1a;
`;

const ScrollButton = styled.button`
  display: flex;
  align-items: center;
  justify-content: center;
  width: 14px;
`;

const Triangle = styled.span`
  border: 3px solid transparent;
  ${props => (props.$left ? "border-right-color" : "border-left-color")}: #a0a0a0;
  ${props => (props.$left ? "border-left" : "border-right")}: 0;
`;

const ScrollThumb = styled.div`
  display: flex;
  align-items: center;
  justify-content: center;
  gap: 1px;
  width: 79%;
  background: #424242;

  i {
    width: 1px;
    height: 5px;
    background: #909090;
  }
`;

const DrawingTools = styled.div`
  display: flex;
  align-items: center;
  justify-content: space-between;
  width: 230px;
  height: 15px;
  padding-left: 3px;

  button {
    display: flex;
    align-items: center;
  }
`;

const DrawingSet = styled.button`
  margin-left: 8px;
  padding-right: 9px;
  color: #dcdcdc;
  font-size: 11px;
  white-space: nowrap;
  ${cornerMark}

  &::after {
    right: 2px;
    bottom: 0;
    border-bottom-color: #c8c8c8;
  }
`;

const SideTabs = styled.nav`
  display: flex;
  flex-direction: column;
  width: 21px;
  border-left: 1px solid #5c5c5c;
  border-right: 1px solid #5c5c5c;
  background: #484848;
`;

const SideTab = styled.button`
  padding: 7px 2px 13px;
  border-top: 1px solid #646464;
  background: ${props => (props.$active ? "#6c6c6c" : "transparent")};
  color: #c8c8c8;
  font-size: 11px;
  line-height: 15px;
  writing-mode: vertical-rl;
  transform: rotate(180deg);
  white-space: nowrap;
`;

export default App;
